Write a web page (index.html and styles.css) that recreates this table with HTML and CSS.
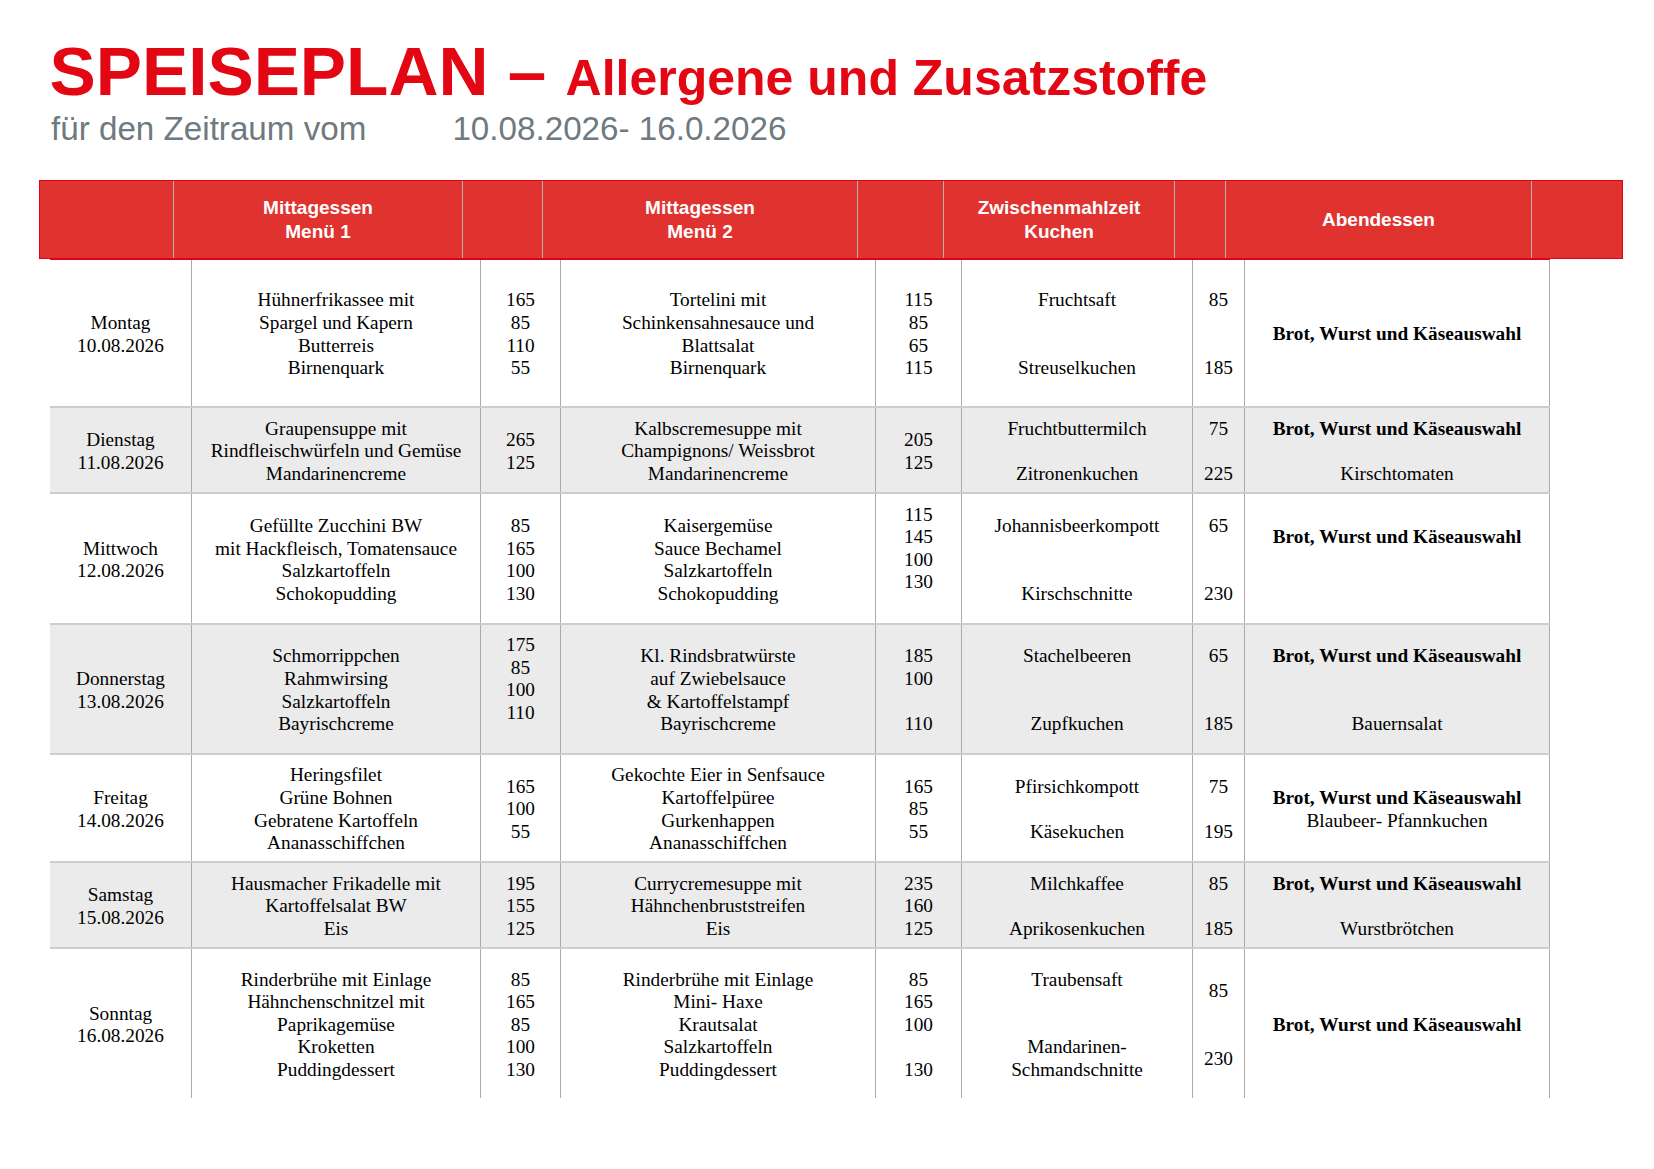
FILE: index.html
```html
<!DOCTYPE html>
<html lang="de">
<head>
<meta charset="utf-8">
<title>Speiseplan</title>
<link rel="stylesheet" href="styles.css">
</head>
<body>
<h1 class="title">SPEISEPLAN – <span class="title-sub">Allergene und Zusatzstoffe</span></h1>
<p class="period">für den Zeitraum vom<span class="period-date">10.08.2026- 16.0.2026</span></p>

<div class="head">
  <div class="hc"></div>
  <div class="hc"><div>Mittagessen</div><div>Menü 1</div></div>
  <div class="hc"></div>
  <div class="hc"><div>Mittagessen</div><div>Menü 2</div></div>
  <div class="hc"></div>
  <div class="hc"><div>Zwischenmahlzeit</div><div>Kuchen</div></div>
  <div class="hc"></div>
  <div class="hc"><div>Abendessen</div></div>
  <div class="hc"></div>
</div>

<div class="plan">
  <div class="row r1">
    <div class="c"><div class="l">Montag</div><div class="l">10.08.2026</div></div>
    <div class="c"><div class="l">Hühnerfrikassee mit</div><div class="l">Spargel und Kapern</div><div class="l">Butterreis</div><div class="l">Birnenquark</div></div>
    <div class="c"><div class="l">165</div><div class="l">85</div><div class="l">110</div><div class="l">55</div></div>
    <div class="c"><div class="l">Tortelini mit</div><div class="l">Schinkensahnesauce und</div><div class="l">Blattsalat</div><div class="l">Birnenquark</div></div>
    <div class="c"><div class="l">115</div><div class="l">85</div><div class="l">65</div><div class="l">115</div></div>
    <div class="c"><div class="l">Fruchtsaft</div><div class="l">&nbsp;</div><div class="l">&nbsp;</div><div class="l">Streuselkuchen</div></div>
    <div class="c"><div class="l">85</div><div class="l">&nbsp;</div><div class="l">&nbsp;</div><div class="l">185</div></div>
    <div class="c"><div class="l b">Brot, Wurst und Käseauswahl</div></div>
  </div>

  <div class="row r2 alt">
    <div class="c"><div class="l">Dienstag</div><div class="l">11.08.2026</div></div>
    <div class="c"><div class="l">Graupensuppe mit</div><div class="l">Rindfleischwürfeln und Gemüse</div><div class="l">Mandarinencreme</div></div>
    <div class="c"><div class="l">265</div><div class="l">125</div></div>
    <div class="c"><div class="l">Kalbscremesuppe mit</div><div class="l">Champignons/ Weissbrot</div><div class="l">Mandarinencreme</div></div>
    <div class="c"><div class="l">205</div><div class="l">125</div></div>
    <div class="c"><div class="l">Fruchtbuttermilch</div><div class="l">&nbsp;</div><div class="l">Zitronenkuchen</div></div>
    <div class="c"><div class="l">75</div><div class="l">&nbsp;</div><div class="l">225</div></div>
    <div class="c"><div class="l b">Brot, Wurst und Käseauswahl</div><div class="l">&nbsp;</div><div class="l">Kirschtomaten</div></div>
  </div>

  <div class="row r3">
    <div class="c"><div class="l">Mittwoch</div><div class="l">12.08.2026</div></div>
    <div class="c"><div class="l">Gefüllte Zucchini BW</div><div class="l">mit Hackfleisch, Tomatensauce</div><div class="l">Salzkartoffeln</div><div class="l">Schokopudding</div></div>
    <div class="c"><div class="l">85</div><div class="l">165</div><div class="l">100</div><div class="l">130</div></div>
    <div class="c"><div class="l">Kaisergemüse</div><div class="l">Sauce Bechamel</div><div class="l">Salzkartoffeln</div><div class="l">Schokopudding</div></div>
    <div class="c"><div class="l">115</div><div class="l">145</div><div class="l">100</div><div class="l">130</div><div class="l">&nbsp;</div></div>
    <div class="c"><div class="l">Johannisbeerkompott</div><div class="l">&nbsp;</div><div class="l">&nbsp;</div><div class="l">Kirschschnitte</div></div>
    <div class="c"><div class="l">65</div><div class="l">&nbsp;</div><div class="l">&nbsp;</div><div class="l">230</div></div>
    <div class="c"><div class="l b">Brot, Wurst und Käseauswahl</div><div class="l">&nbsp;</div><div class="l">&nbsp;</div></div>
  </div>

  <div class="row r4 alt">
    <div class="c"><div class="l">Donnerstag</div><div class="l">13.08.2026</div></div>
    <div class="c"><div class="l">Schmorrippchen</div><div class="l">Rahmwirsing</div><div class="l">Salzkartoffeln</div><div class="l">Bayrischcreme</div></div>
    <div class="c"><div class="l">175</div><div class="l">85</div><div class="l">100</div><div class="l">110</div><div class="l">&nbsp;</div></div>
    <div class="c"><div class="l">Kl. Rindsbratwürste</div><div class="l">auf Zwiebelsauce</div><div class="l">&amp; Kartoffelstampf</div><div class="l">Bayrischcreme</div></div>
    <div class="c"><div class="l">185</div><div class="l">100</div><div class="l">&nbsp;</div><div class="l">110</div></div>
    <div class="c"><div class="l">Stachelbeeren</div><div class="l">&nbsp;</div><div class="l">&nbsp;</div><div class="l">Zupfkuchen</div></div>
    <div class="c"><div class="l">65</div><div class="l">&nbsp;</div><div class="l">&nbsp;</div><div class="l">185</div></div>
    <div class="c"><div class="l b">Brot, Wurst und Käseauswahl</div><div class="l">&nbsp;</div><div class="l">&nbsp;</div><div class="l">Bauernsalat</div></div>
  </div>

  <div class="row r5">
    <div class="c"><div class="l">Freitag</div><div class="l">14.08.2026</div></div>
    <div class="c"><div class="l">Heringsfilet</div><div class="l">Grüne Bohnen</div><div class="l">Gebratene Kartoffeln</div><div class="l">Ananasschiffchen</div></div>
    <div class="c"><div class="l">165</div><div class="l">100</div><div class="l">55</div></div>
    <div class="c"><div class="l">Gekochte Eier in Senfsauce</div><div class="l">Kartoffelpüree</div><div class="l">Gurkenhappen</div><div class="l">Ananasschiffchen</div></div>
    <div class="c"><div class="l">165</div><div class="l">85</div><div class="l">55</div></div>
    <div class="c"><div class="l">Pfirsichkompott</div><div class="l">&nbsp;</div><div class="l">Käsekuchen</div></div>
    <div class="c"><div class="l">75</div><div class="l">&nbsp;</div><div class="l">195</div></div>
    <div class="c"><div class="l b">Brot, Wurst und Käseauswahl</div><div class="l">Blaubeer- Pfannkuchen</div></div>
  </div>

  <div class="row r6 alt">
    <div class="c"><div class="l">Samstag</div><div class="l">15.08.2026</div></div>
    <div class="c"><div class="l">Hausmacher Frikadelle mit</div><div class="l">Kartoffelsalat BW</div><div class="l">Eis</div></div>
    <div class="c"><div class="l">195</div><div class="l">155</div><div class="l">125</div></div>
    <div class="c"><div class="l">Currycremesuppe mit</div><div class="l">Hähnchenbruststreifen</div><div class="l">Eis</div></div>
    <div class="c"><div class="l">235</div><div class="l">160</div><div class="l">125</div></div>
    <div class="c"><div class="l">Milchkaffee</div><div class="l">&nbsp;</div><div class="l">Aprikosenkuchen</div></div>
    <div class="c"><div class="l">85</div><div class="l">&nbsp;</div><div class="l">185</div></div>
    <div class="c"><div class="l b">Brot, Wurst und Käseauswahl</div><div class="l">&nbsp;</div><div class="l">Wurstbrötchen</div></div>
  </div>

  <div class="row r7 last">
    <div class="c"><div class="l">Sonntag</div><div class="l">16.08.2026</div></div>
    <div class="c"><div class="l">Rinderbrühe mit Einlage</div><div class="l">Hähnchenschnitzel mit</div><div class="l">Paprikagemüse</div><div class="l">Kroketten</div><div class="l">Puddingdessert</div></div>
    <div class="c"><div class="l">85</div><div class="l">165</div><div class="l">85</div><div class="l">100</div><div class="l">130</div></div>
    <div class="c"><div class="l">Rinderbrühe mit Einlage</div><div class="l">Mini- Haxe</div><div class="l">Krautsalat</div><div class="l">Salzkartoffeln</div><div class="l">Puddingdessert</div></div>
    <div class="c"><div class="l">85</div><div class="l">165</div><div class="l">100</div><div class="l">&nbsp;</div><div class="l">130</div></div>
    <div class="c"><div class="l">Traubensaft</div><div class="l">&nbsp;</div><div class="l">&nbsp;</div><div class="l">Mandarinen-</div><div class="l">Schmandschnitte</div></div>
    <div class="c"><div class="l">85</div><div class="l">&nbsp;</div><div class="l">&nbsp;</div><div class="l">230</div></div>
    <div class="c"><div class="l b">Brot, Wurst und Käseauswahl</div></div>
  </div>
</div>
</body>
</html>
```

FILE: styles.css
```css
* { box-sizing: border-box; }

html, body {
  margin: 0;
  padding: 0;
  background: #ffffff;
}

body {
  width: 1654px;
  font-family: "Liberation Serif", "Times New Roman", serif;
  color: #000;
}

.title {
  margin: 36.6px 0 0 0;
  padding-left: 49.5px;
  font-family: "Liberation Sans", Arial, sans-serif;
  font-weight: bold;
  font-size: 69.3px;
  line-height: 69px;
  color: #e30613;
  white-space: nowrap;
}

.title-sub {
  font-size: 50px;
  line-height: 50px;
}

.period {
  margin: 6.5px 0 0 0;
  padding-left: 51px;
  font-family: "Liberation Sans", Arial, sans-serif;
  font-size: 33.2px;
  line-height: 33px;
  color: #6e7a7f;
  white-space: nowrap;
}

.period-date {
  margin-left: 86px;
}

.head {
  margin: 35px 0 0 39px;
  width: 1584px;
  height: 79px;
  display: grid;
  grid-template-columns: 133px 289px 80px 315px 86px 231px 51px 306px 91px;
  background: #e0332f;
  border: 1px solid #e2001a;
  font-family: "Liberation Sans", Arial, sans-serif;
  font-weight: bold;
  font-size: 19px;
  line-height: 24px;
  color: #ffffff;
}

.hc {
  display: flex;
  flex-direction: column;
  justify-content: center;
  align-items: center;
  text-align: center;
  white-space: nowrap;
  padding-top: 1px;
  border-left: 1px solid #b9b1b1;
}

.hc:first-child { border-left: none; }

.plan {
  margin-left: 50px;
  width: 1500px;
  border-top: 1px solid #e2001a;
}

.row {
  display: grid;
  grid-template-columns: 141px 289px 80px 315px 86px 231px 52px 306px;
  border-bottom: 2px solid #cdcdcd;
  font-size: 19.3px;
  line-height: 22.6px;
}

.row.alt { background: #ebebeb; }
.row.last { border-bottom: none; }

.r1 { height: 148px; }
.r2 { height: 86px; }
.r3 { height: 131px; }
.r4 { height: 130px; }
.r5 { height: 108px; }
.r6 { height: 86px; }
.r7 { height: 149px; }

.c {
  display: flex;
  flex-direction: column;
  justify-content: center;
  align-items: center;
  text-align: center;
  padding-top: 3px;
  border-left: 1px solid #aaaaaa;
}

.c:first-child { border-left: none; }
.c:last-child { border-right: 1px solid #aaaaaa; }

.l { white-space: nowrap; }
.b { font-weight: bold; }
```
